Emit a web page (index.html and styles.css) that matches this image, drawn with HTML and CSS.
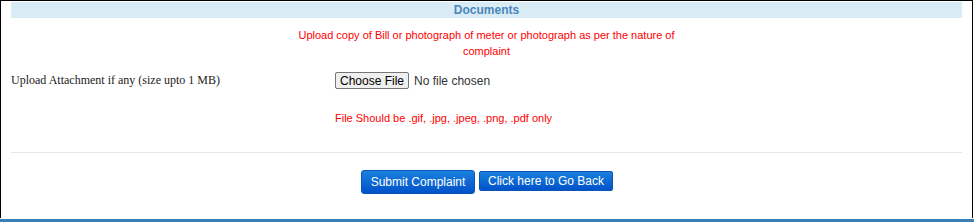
FILE: index.html
```html
<!DOCTYPE html>
<html>
<head>
<meta charset="utf-8">
<title>Documents</title>
<link rel="stylesheet" href="styles.css">
</head>
<body>
<div class="panel">
  <div class="section-head">Documents</div>
  <p class="notice">Upload copy of Bill or photograph of meter or photograph as per the nature of complaint</p>
  <div class="field-row">
    <label class="field-label" for="att">Upload Attachment if any (size upto 1 MB)</label>
    <div class="field-input"><input type="file" id="att" class="file-input"></div>
  </div>
  <div class="hint-row">
    <span></span>
    <span class="hint">File Should be .gif, .jpg, .jpeg, .png, .pdf only</span>
  </div>
  <hr class="divider">
  <div class="actions">
    <button class="btn btn-submit" type="button">Submit Complaint</button>
    <button class="btn btn-back" type="button">Click here to Go Back</button>
  </div>
</div>
<div class="footer-bar"></div>
</body>
</html>
```
FILE: styles.css
```css
html, body {
  margin: 0;
  padding: 0;
  background: #fff;
  overflow: hidden;
}
body {
  width: 974px;
  height: 222px;
  font-family: "Liberation Sans", Arial, sans-serif;
}
.panel {
  width: 951px;
  height: 216px;
  border: 1px solid #000;
  border-bottom: none;
  padding: 1px 10px 0 10px;
}
.section-head {
  height: 16px;
  line-height: 16px;
  background: #d9ecf5;
  color: #4a87bb;
  font-weight: bold;
  font-size: 12px;
  text-align: center;
}
.notice {
  width: 390px;
  margin: 9px auto 0;
  color: #ff0000;
  font-size: 11px;
  line-height: 16px;
  text-align: center;
}
.field-row,
.hint-row {
  display: grid;
  grid-template-columns: 324px 1fr;
  align-items: center;
}
.field-row {
  margin-top: 11px;
  height: 21px;
}
.field-label {
  font-family: "Liberation Serif", "Times New Roman", serif;
  font-size: 12px;
  color: #222;
}
.file-input {
  font-family: "Liberation Sans", Arial, sans-serif;
  font-size: 12px;
  color: #333;
  display: block;
}
.file-input::file-selector-button {
  font-family: "Liberation Sans", Arial, sans-serif;
  font-size: 12px;
  height: 17px;
  padding: 0 4px;
  margin-right: 5px;
  border: 1px solid #767676;
  border-radius: 2px;
  background: #efefef;
  color: #000;
}
.hint-row {
  margin-top: 19px;
  height: 16px;
}
.hint {
  color: #ff0000;
  font-size: 11px;
  line-height: 16px;
}
.divider {
  margin: 26px 0 0;
  border: none;
  border-top: 1px solid #e6e6e6;
  height: 0;
}
.actions {
  display: flex;
  justify-content: center;
  align-items: flex-start;
  gap: 4px;
  margin-top: 17px;
  padding-left: 1px;
}
.btn {
  font-family: "Liberation Sans", Arial, sans-serif;
  font-size: 12px;
  color: #fff;
  border: 1px solid #0a56b8;
  border-radius: 3px;
  background: linear-gradient(#1a80dd, #0052c9);
  padding: 0;
  cursor: pointer;
}
.btn-submit {
  width: 114px;
  height: 24px;
}
.btn-back {
  width: 134px;
  height: 20px;
  margin-top: 1px;
  border-radius: 2px;
}
.footer-bar {
  width: 974px;
  height: 4px;
  margin-top: 1px;
  background: #3a80b4;
}
```
